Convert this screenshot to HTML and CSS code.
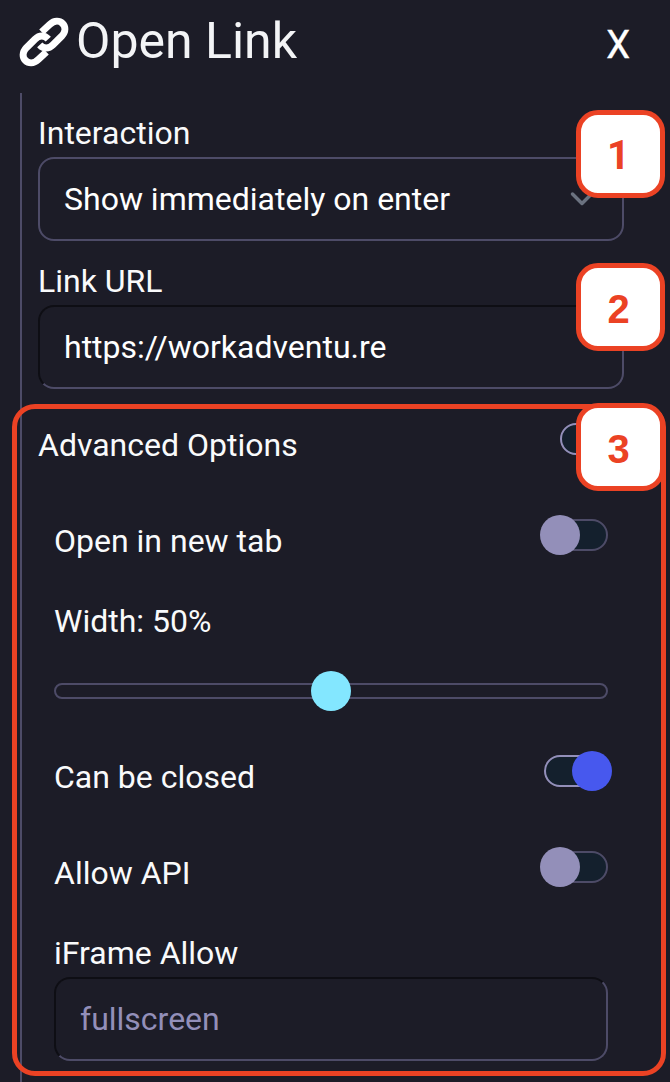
FILE: index.html
```html
<!DOCTYPE html>
<html lang="en">
<head>
<meta charset="utf-8">
<title>Open Link</title>
<link rel="stylesheet" href="styles.css">
</head>
<body>
<main class="editor">
  <header class="header">
    <svg class="link-icon" viewBox="-1.500 -1.500 59 59" fill="none" stroke="#fff" stroke-width="7.400">
      <path d="M25.500 17.500L34 9.500C44 0 56 12 46.500 22L37.500 31C33 35.500 27.500 35.500 23.500 31"/>
      <path d="M30.500 38.500L22 46.500C12 56 0 44 9.500 34L18.500 25C23 20.500 28.500 20.500 32.500 25"/>
    </svg>
    <h1 class="title">Open Link</h1>
    <button class="close">X</button>
  </header>
  <section class="panel">
    <div class="field">
      <label class="label">Interaction</label>
      <div class="box select">Show immediately on enter
        <svg class="chevron" viewBox="0 0 24 16"><path d="M2.500 3l9.500 9.500L21.500 3" fill="none" stroke="#6b7280" stroke-width="3.500" stroke-linecap="round" stroke-linejoin="round"/></svg>
      </div>
    </div>
    <div class="field">
      <label class="label">Link URL</label>
      <div class="box input">https://workadventu.re</div>
    </div>
    <div class="row advanced"><span>Advanced Options</span><span class="toggle on"></span></div>
    <div class="options">
      <div class="row"><span>Open in new tab</span><span class="toggle"></span></div>
      <div class="row"><span>Width: 50%</span></div>
      <div class="slider"><span class="thumb"></span></div>
      <div class="row closable"><span>Can be closed</span><span class="toggle on"></span></div>
      <div class="row"><span>Allow API</span><span class="toggle"></span></div>
      <div class="field last">
        <label class="label">iFrame Allow</label>
        <div class="box input placeholder">fullscreen</div>
      </div>
    </div>
  </section>
  <div class="frame"></div>
  <div class="badge first">1</div>
  <div class="badge second">2</div>
  <div class="badge third">3</div>
</main>
</body>
</html>
```
FILE: styles.css
```css
* { box-sizing: border-box; }
body { margin: 0; background: #1c1c27; color: #f9fafb; font: 32px/48px Roboto, sans-serif; overflow: hidden; }
.editor { position: relative; height: 1082px; display: flex; flex-direction: column; }
.header { height: 93px; flex: none; display: flex; align-items: flex-start; padding: 14px 40px 0 16px; }
.link-icon { width: 56px; height: 56px; }
.title { margin: 0 auto 0 4px; font-size: 50px; line-height: 54px; font-weight: 400; color: #f3f4f6; }
.close { border: 0; padding: 0; background: none; color: #fff; font: 400 38px/62px Roboto, sans-serif; -webkit-text-stroke: 0.4px #fff; }
.panel { flex: 1; margin-left: 20px; border-left: 2px solid #4d4b67; padding: 16px 46px 0 16px; }
.field { margin-bottom: 16px; }
.label { display: block; }
.box { height: 84px; border: 2px solid #4d4b67; border-radius: 16px; padding: 0 24px; line-height: 80px; color: #fff; }
.select { display: flex; justify-content: space-between; align-items: center; }
.chevron { width: 24px; height: 16px; margin-right: 4px; }
.input { border-top-color: #0e0e14; border-left-color: #0e0e14; }
.placeholder { color: #938fb9; }
.row { height: 48px; display: flex; justify-content: space-between; margin-bottom: 48px; }
.advanced { margin-top: 32px; }
.options { padding: 0 16px; }
.options .row:nth-child(1) { margin-bottom: 32px; }
.options .row:nth-child(2) { margin-bottom: 38px; }
.options .row:nth-child(5) { margin-bottom: 32px; }
.toggle { width: 64px; height: 32px; margin-top: 2px; border: 2px solid #4d4b67; border-radius: 16px; background: #14202d; }
.toggle::before { content: ""; display: block; width: 40px; height: 40px; border-radius: 50%; margin: -6px 0 0 -6px; background: #938fb9; }
.toggle.on { border-color: #938fb9; }
.toggle.on::before { margin-left: 26px; background: #4758ee; }
.slider { height: 16px; border: 2px solid #4d4b67; border-radius: 8px; display: flex; justify-content: center; align-items: center; margin-bottom: 54px; }
.thumb { flex: none; width: 40px; height: 40px; border-radius: 50%; background: #83e7ff; }
.frame { position: absolute; left: 11.5px; top: 403.5px; width: 654px; height: 672px; border: 5px solid #eb4224; border-radius: 23px; }
.badge { position: absolute; left: 575.5px; width: 89px; height: 88px; border: 5px solid #eb4224; border-radius: 22px; background: #fff; color: #eb4224; font: bold 40px/82px "Liberation Sans", Arial, sans-serif; text-align: center; padding-right: 3px; }
.first { top: 110px; font-family: Roboto, sans-serif; }
.second { top: 263px; }
.third { top: 403px; }
```
